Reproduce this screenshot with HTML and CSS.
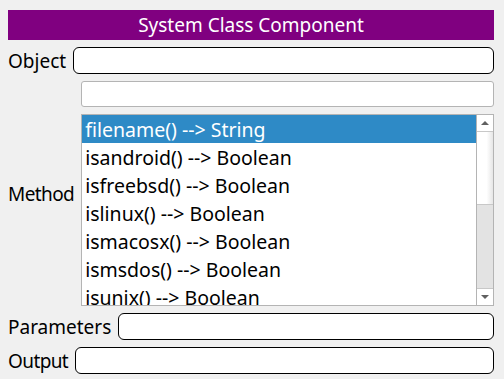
FILE: index.html
```html
<!DOCTYPE html>
<html lang="en">

<head>
  <meta charset="UTF-8" />
  <title>System Class Component</title>
  <link rel="stylesheet" href="styles.css">
</head>

<body>
  <div class="panel">
    <div class="title">System Class Component</div>

    <div class="row">
      <label class="label">Object</label>
      <div class="field"></div>
    </div>

    <div class="row method">
      <label class="label tight">Method</label>
      <div class="method-col">
        <div class="field filter"></div>
        <div class="listbox">
          <div class="items">
            <div class="item selected">filename() --&gt; String</div>
            <div class="item">isandroid() --&gt; Boolean</div>
            <div class="item">isfreebsd() --&gt; Boolean</div>
            <div class="item">islinux() --&gt; Boolean</div>
            <div class="item">ismacosx() --&gt; Boolean</div>
            <div class="item">ismsdos() --&gt; Boolean</div>
            <div class="item">isunix() --&gt; Boolean</div>
          </div>
          <div class="scrollbar">
            <div class="arrow up"></div>
            <div class="thumb"></div>
            <div class="track"></div>
            <div class="arrow down"></div>
          </div>
        </div>
      </div>
    </div>

    <div class="row">
      <label class="label">Parameters</label>
      <div class="field"></div>
    </div>

    <div class="row">
      <label class="label tight">Output</label>
      <div class="field"></div>
    </div>
  </div>
</body>

</html>
```

FILE: styles.css
```css
html,
body {
  margin: 0;
  height: 100%;
  background: #f0f0f0;
  font-family: 'Noto Sans', 'Open Sans', sans-serif;
  font-size: 19px;
  overflow: hidden;
}

.panel {
  padding: 10px 10px 0 8px;
  display: flex;
  flex-direction: column;
  gap: 7px;
}

.title {
  height: 30px;
  line-height: 30px;
  background: #800080;
  color: #fff;
  text-align: center;
}

.row {
  display: flex;
  align-items: center;
  gap: 7px;
}

.label {
  color: #000;
  white-space: nowrap;
  line-height: 24px;
}

.label.tight {
  letter-spacing: -0.6px;
}

.field {
  flex: 1;
  height: 25px;
  background: #fff;
  border: 1px solid #000;
  border-radius: 6px;
}

.method-col {
  flex: 1;
  display: flex;
  flex-direction: column;
  gap: 7px;
}

.field.filter {
  flex: none;
  height: 24px;
  border-color: #b4b4b4;
  border-radius: 3px;
}

.listbox {
  height: 190px;
  background: #fff;
  border: 1px solid #b4b4b4;
  display: flex;
  overflow: hidden;
}

.items {
  flex: 1;
  overflow: hidden;
}

.item {
  height: 28px;
  line-height: 30px;
  padding-left: 3px;
  font-size: 19.5px;
  white-space: nowrap;
  color: #000;
}

.item.selected {
  background: #2e8ac6;
  color: #fff;
}

.scrollbar {
  width: 16px;
  border-left: 1px solid #b4b4b4;
  display: flex;
  flex-direction: column;
}

.arrow {
  height: 16px;
  background: #fff;
  position: relative;
}

.arrow.up {
  border-bottom: 1px solid #c8c8c8;
}

.arrow.down {
  border-top: 1px solid #c8c8c8;
}

.arrow::after {
  content: '';
  position: absolute;
  left: 4px;
  top: 6px;
  border-left: 4px solid transparent;
  border-right: 4px solid transparent;
}

.arrow.up::after {
  border-bottom: 4px solid #606060;
}

.arrow.down::after {
  border-top: 4px solid #606060;
}

.thumb {
  height: 72px;
  background: linear-gradient(to right, #fff 60%, #e6e6e6);
  border-bottom: 1px solid #c8c8c8;
}

.track {
  flex: 1;
  background: #e3e3e3;
}
```
